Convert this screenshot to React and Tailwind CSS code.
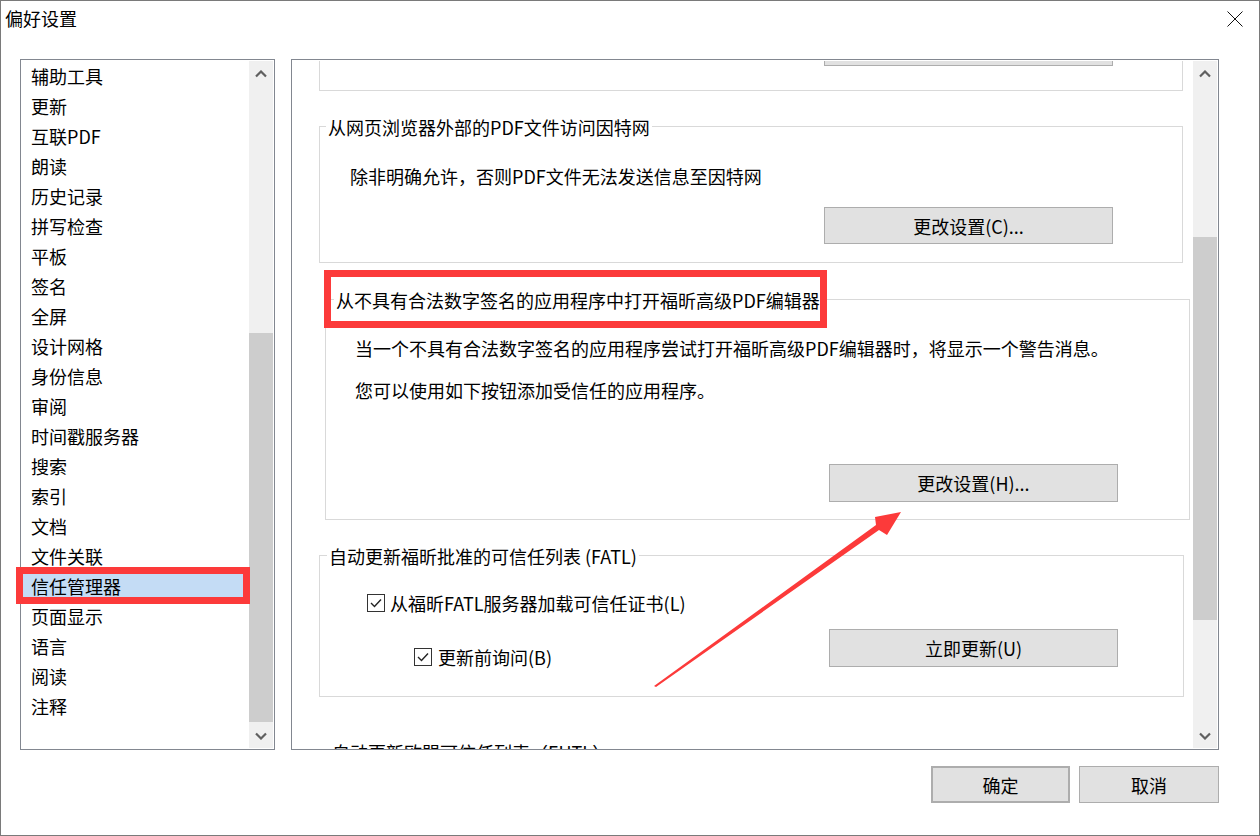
import React from 'react';

const items = [
  '辅助工具', '更新', '互联PDF', '朗读', '历史记录', '拼写检查', '平板', '签名', '全屏', '设计网格', '身份信息',
  '审阅', '时间戳服务器', '搜索', '索引', '文档', '文件关联', '信任管理器', '页面显示', '语言', '阅读', '注释',
];

const Chevron = ({ down }) => (
  <svg width="12" height="8" viewBox="0 0 12 8">
    <polyline
      points={down ? '1,1.5 6,6.5 11,1.5' : '1,6.5 6,1.5 11,6.5'}
      fill="none"
      stroke="#606060"
      strokeWidth="2.2"
    />
  </svg>
);

const ScrollBar = ({ topClass, thumbClass }) => (
  <div className="w-[24px] my-px mr-px bg-[#f0f0f0] flex flex-col shrink-0">
    <div className="h-[25px] flex items-center justify-center">
      <Chevron />
    </div>
    <div className={topClass} />
    <div className={`bg-[#cdcdcd] ${thumbClass}`} />
    <div className="flex-1" />
    <div className="h-[25px] flex items-center justify-center">
      <Chevron down />
    </div>
  </div>
);

const Btn = ({ children, className }) => (
  <div className={`flex items-center justify-center bg-[#e1e1e1] border border-[#adadad] text-[18px] leading-[24px] text-black ${className}`}>
    {children}
  </div>
);

const Group = ({ legend, legendClass, className, children }) => (
  <div className={`relative border border-[#d9d9d9] shrink-0 ${className}`}>
    <span className={`absolute top-0 -translate-y-1/2 bg-white px-[2px] leading-[24px] whitespace-nowrap ${legendClass}`}>
      {legend}
    </span>
    {children}
  </div>
);

const CheckBox = () => (
  <div className="w-[18px] h-[18px] border border-[#333] bg-white flex items-center justify-center shrink-0">
    <svg width="12" height="10" viewBox="0 0 12 10">
      <polyline points="1,5 4.5,8.5 11,1.5" fill="none" stroke="#222" strokeWidth="1.4" />
    </svg>
  </div>
);

const App = () => {
  return (
    <div className="relative w-[1260px] h-[836px] bg-white border border-[#7a7a7a] flex flex-col text-black text-[18px] font-['Noto_Sans_CJK_SC','Noto_Sans',sans-serif] overflow-hidden">
      {/* Title bar */}
      <div className="h-[58px] flex justify-between items-start shrink-0">
        <div className="pl-[4px] pt-[5px] leading-[24px]">偏好设置</div>
        <div className="mt-[10px] mr-[16px]">
          <svg width="16" height="16" viewBox="0 0 16 16">
            <path d="M0.5 0.5 L15.5 15.5 M15.5 0.5 L0.5 15.5" stroke="#111" strokeWidth="1" />
          </svg>
        </div>
      </div>

      {/* Main row */}
      <div className="flex pl-[19px] gap-[16px] h-[691px] shrink-0">
        {/* Category list */}
        <div className="w-[255px] h-full border border-[#828790] flex">
          <div className="flex-1 pt-px pl-px overflow-hidden">
            {items.map((item) => (
              <div
                key={item}
                className={`h-[30px] flex items-center pl-[9px] leading-[24px] ${item === '信任管理器' ? 'bg-[#c4dcf5]' : ''}`}
              >
                {item}
              </div>
            ))}
          </div>
          <ScrollBar topClass="h-[247px]" thumbClass="h-[389px]" />
        </div>

        {/* Settings panel */}
        <div className="w-[928px] h-full border border-[#828790] flex">
          <div className="flex-1 pt-px pl-px overflow-hidden flex flex-col">
            {/* partially scrolled group */}
            <div className="ml-[26px] w-[864px] h-[30px] border-x border-b border-[#d9d9d9] shrink-0">
              <div className="ml-[504px] w-[289px] h-[5px] border-x border-b border-[#adadad] bg-[#e1e1e1]" />
            </div>

            <Group legend="从网页浏览器外部的PDF文件访问因特网" legendClass="left-[6px]" className="mt-[35px] ml-[26px] w-[864px] h-[137px]">
              <div className="pl-[30px] pt-[37px] leading-[24px]">除非明确允许，否则PDF文件无法发送信息至因特网</div>
              <Btn className="mt-[19px] ml-[504px] w-[289px] h-[37px]">更改设置(C)...</Btn>
            </Group>

            <Group legend="从不具有合法数字签名的应用程序中打开福昕高级PDF编辑器" legendClass="left-[8px]" className="mt-[36px] ml-[32px] w-[865px] h-[221px]">
              <div className="pl-[29px] pt-[36px] leading-[24px]">当一个不具有合法数字签名的应用程序尝试打开福昕高级PDF编辑器时，将显示一个警告消息。</div>
              <div className="pl-[29px] mt-[18px] leading-[24px]">您可以使用如下按钮添加受信任的应用程序。</div>
              <Btn className="mt-[62px] ml-[503px] w-[289px] h-[38px]">更改设置(H)...</Btn>
            </Group>

            <Group legend="自动更新福昕批准的可信任列表 (FATL)" legendClass="left-[7px]" className="mt-[35px] ml-[26px] w-[865px] h-[142px]">
              <div className="flex">
                <div className="w-[509px] pt-[35px]">
                  <div className="h-[24px] flex items-center pl-[47px] gap-[5px] leading-[24px]">
                    <CheckBox />
                    <span>从福昕FATL服务器加载可信任证书(L)</span>
                  </div>
                  <div className="h-[24px] mt-[30px] flex items-center pl-[94px] gap-[6px] leading-[24px]">
                    <CheckBox />
                    <span>更新前询问(B)</span>
                  </div>
                </div>
                <Btn className="mt-[73px] w-[289px] h-[38px]">立即更新(U)</Btn>
              </div>
            </Group>

            <Group legend="自动更新欧盟可信任列表（EUTL）" legendClass="left-[10px]" className="mt-[54px] ml-[26px] w-[865px] h-[120px]" />
          </div>
          <ScrollBar topClass="h-[151px]" thumbClass="h-[383px]" />
        </div>
      </div>

      {/* Footer buttons */}
      <div className="flex justify-end gap-[9px] pr-[40px] mt-[16px]">
        <Btn className="w-[139px] h-[37px] border-2 border-[#0078d7]">确定</Btn>
        <Btn className="w-[140px] h-[37px]">取消</Btn>
      </div>

      {/* Annotations */}
      <div className="absolute left-[15px] top-[566px] w-[234px] h-[37px] border-[7px] border-[#fc3a3a] pointer-events-none" />
      <div className="absolute left-[323px] top-[269px] w-[503px] h-[58px] border-[7px] border-[#fc3a3a] pointer-events-none" />
      <svg className="absolute -left-px -top-px pointer-events-none" width="1260" height="836" viewBox="0 0 1260 836">
        <polygon points="654,686 876,525 875,517 901,512 887,535 879,530 656,687" fill="#fc3a3a" />
      </svg>
    </div>
  );
};

export default App;
